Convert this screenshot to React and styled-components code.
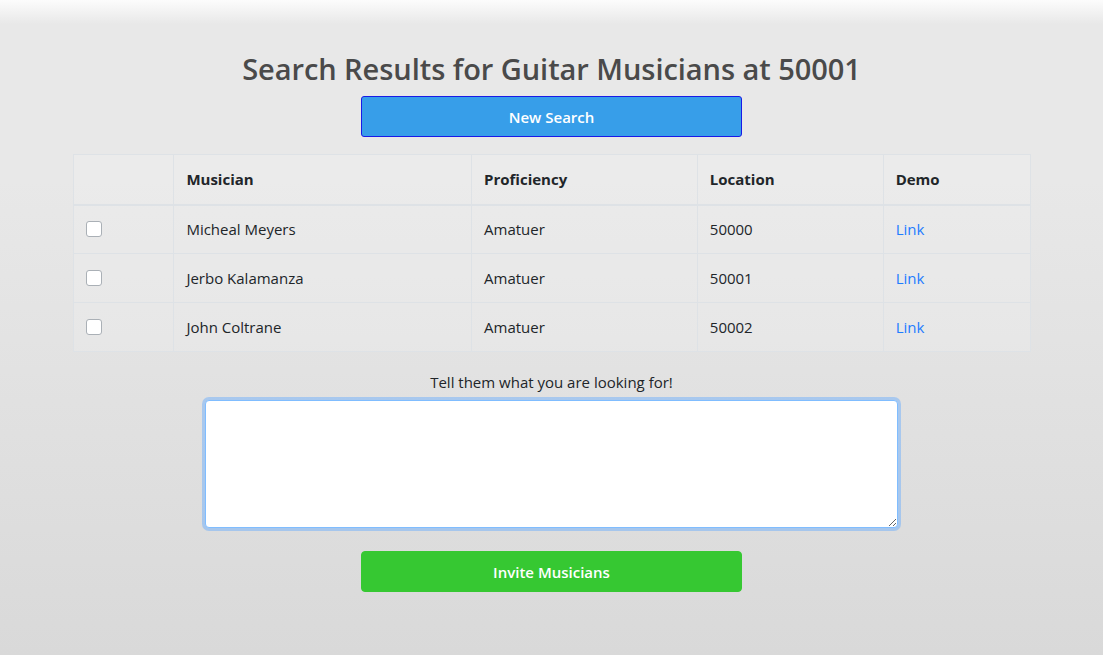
import React from "react";
import styled, { createGlobalStyle } from "styled-components";

const GlobalStyle = createGlobalStyle`
  html, body { margin: 0; padding: 0; }
  body {
    font-family: "Open Sans", "Noto Sans", "Liberation Sans", sans-serif;
    color: #212529;
    font-size: 16px;
    line-height: 1.5;
  }
  * { box-sizing: border-box; }
`;

const Page = styled.div`
  min-height: 655px;
  display: flex;
  flex-direction: column;
  align-items: center;
  padding-top: 50px;
  background: linear-gradient(to bottom, #fcfcfc 0px, #e8e8e8 24px, #e8e8e8 180px, #d9d9d9 655px);
`;

const Title = styled.h2`
  margin: 0 0 8px;
  font-size: 29px;
  font-weight: 600;
  line-height: 38px;
  color: #4a4a4a;
  letter-spacing: -0.05px;
`;

const ActionButton = styled.button`
  width: 381px;
  height: 41px;
  border-radius: 3px;
  border: 1px solid ${(p) => (p.$variant === "green" ? "#36c832" : "#1a1ae6")};
  background: ${(p) => (p.$variant === "green" ? "#36c832" : "#379ee9")};
  color: #ffffff;
  font-family: inherit;
  font-size: 15px;
  font-weight: 600;
  cursor: pointer;
`;

const Table = styled.table`
  width: 958px;
  margin-top: 17px;
  border-collapse: collapse;
  background: rgba(255, 255, 255, 0.15);
`;

const Col = styled.col`
  width: ${(p) => p.$w}px;
`;

const Th = styled.th`
  text-align: left;
  font-weight: 700;
  font-size: 15px;
  height: 50px;
  padding: 0 12px;
  border: 1px solid #dee2e6;
  border-bottom-width: 2px;
  vertical-align: middle;
`;

const Td = styled.td`
  height: 49px;
  padding: 0 12px;
  border: 1px solid #dee2e6;
  font-size: 15px;
  vertical-align: middle;
`;

const Check = styled.input.attrs({ type: "checkbox" })`
  appearance: none;
  display: block;
  width: 16px;
  height: 16px;
  margin: 0;
  border: 1px solid #aab0b6;
  border-radius: 3px;
  background: #fff;
`;

const DemoLink = styled.a`
  color: #1e7cff;
  text-decoration: none;
`;

const Label = styled.label`
  margin-top: 18px;
  font-size: 15px;
  line-height: 24px;
  color: #212529;
`;

const Message = styled.textarea`
  margin-top: 6px;
  width: 693px;
  height: 128px;
  border: 1px solid #80bdff;
  border-radius: 4px;
  box-shadow: 0 0 0 3px rgba(100, 170, 255, 0.45);
  background: #fff;
  outline: none;
  font-family: inherit;
  font-size: 15px;
  padding: 6px 12px;
`;

const InviteButton = styled(ActionButton)`
  margin-top: 23px;
  border-radius: 4px;
`;

const rows = [
  { name: "Micheal Meyers", level: "Amatuer", loc: "50000" },
  { name: "Jerbo Kalamanza", level: "Amatuer", loc: "50001" },
  { name: "John Coltrane", level: "Amatuer", loc: "50002" },
];

export default function App() {
  return (
    <>
      <GlobalStyle />
      <Page>
        <Title>Search Results for Guitar Musicians at 50001</Title>
        <ActionButton $variant="blue">New Search</ActionButton>
        <Table>
          <colgroup>
            <Col $w={101} />
            <Col $w={298} />
            <Col $w={226} />
            <Col $w={186} />
            <Col $w={147} />
          </colgroup>
          <thead>
            <tr>
              <Th></Th>
              <Th>Musician</Th>
              <Th>Proficiency</Th>
              <Th>Location</Th>
              <Th>Demo</Th>
            </tr>
          </thead>
          <tbody>
            {rows.map((r) => (
              <tr key={r.name}>
                <Td>
                  <Check />
                </Td>
                <Td>{r.name}</Td>
                <Td>{r.level}</Td>
                <Td>{r.loc}</Td>
                <Td>
                  <DemoLink href="#">Link</DemoLink>
                </Td>
              </tr>
            ))}
          </tbody>
        </Table>
        <Label htmlFor="msg">Tell them what you are looking for!</Label>
        <Message id="msg" />
        <InviteButton $variant="green">Invite Musicians</InviteButton>
      </Page>
    </>
  );
}
